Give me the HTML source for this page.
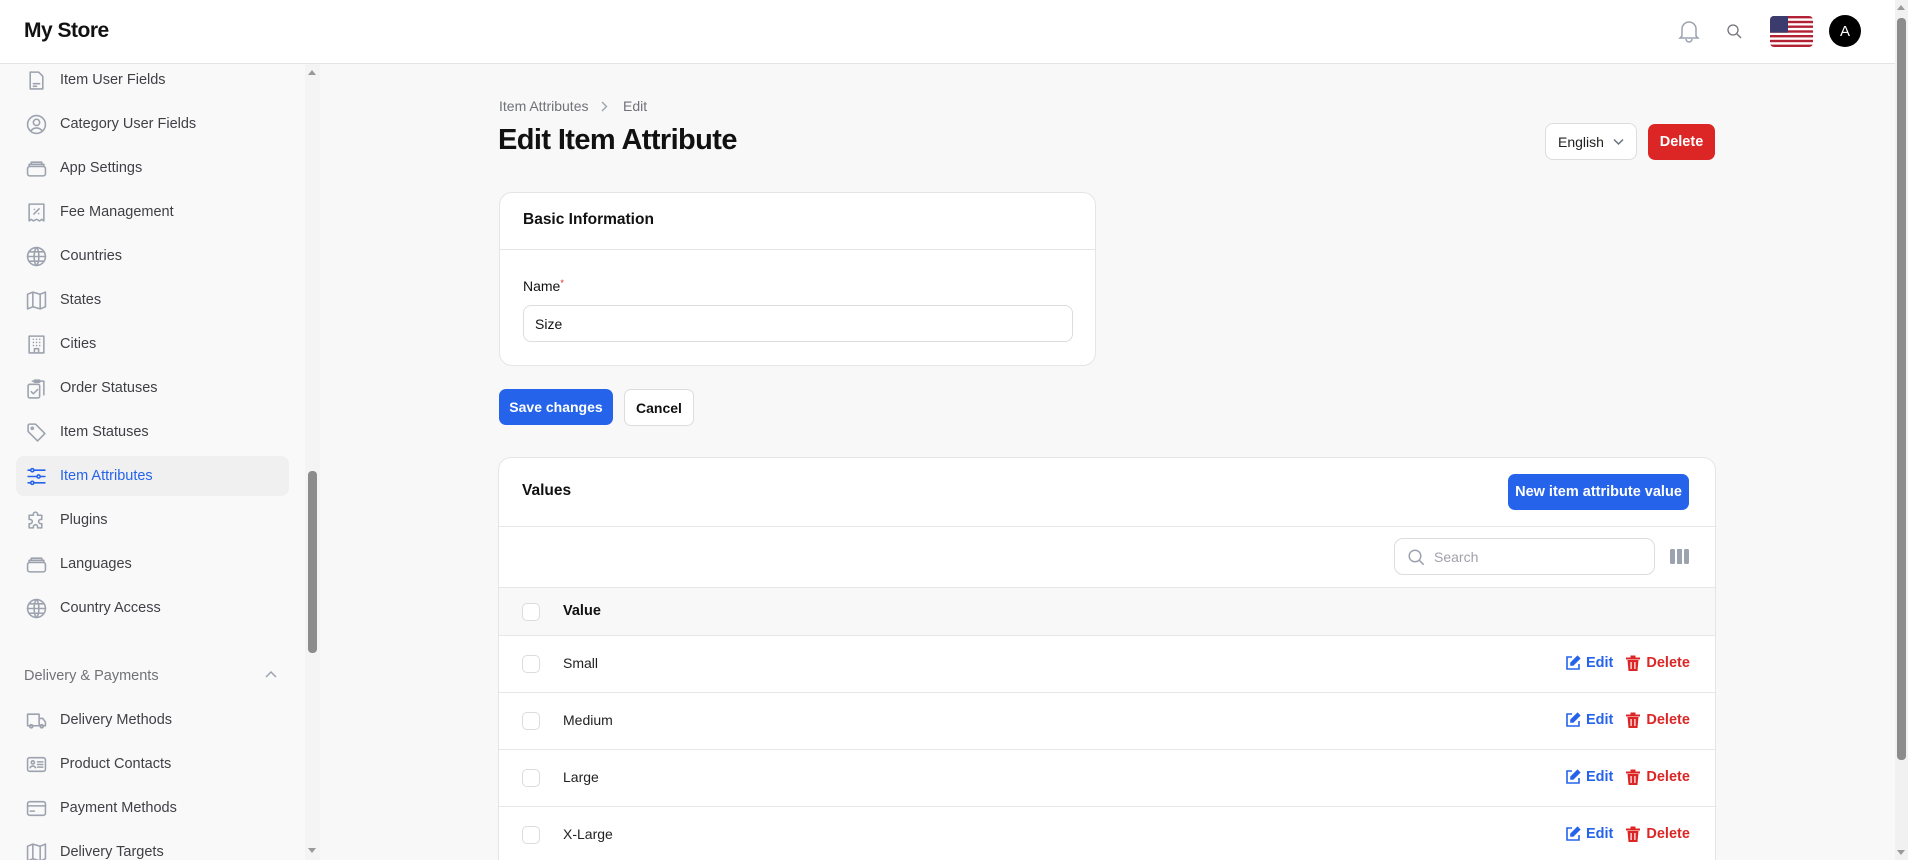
<!DOCTYPE html>
<html style="width:1908px;height:860px;overflow:hidden"><head><meta charset="utf-8">
<style>
*{box-sizing:border-box;margin:0;padding:0}
body{width:1908px;height:860px;overflow:hidden;background:#f8f8f8;font-family:"Liberation Sans",sans-serif;color:#111}
#wrap{position:relative;width:1908px;height:860px;overflow:hidden}
.abs{position:absolute}
.hdr{left:0;top:0;width:1895px;height:64px;background:#fff;border-bottom:1px solid #e4e4e7}
.logo{left:24px;top:19px;font-size:21px;font-weight:bold;letter-spacing:-0.5px}
.side{left:0;top:64px;width:305px;height:796px;background:#f9f9f9}
.strack{left:305px;top:64px;width:15px;height:796px;background:#f4f4f4}
.item{position:absolute;left:16px;width:273px;height:40px;display:flex;align-items:center;font-size:14.5px;color:#3f3f46;border-radius:8px}
.item svg{position:absolute;left:10px;width:21px;height:21px;fill:none;stroke:#9ca3af;stroke-width:1.5;stroke-linecap:round;stroke-linejoin:round}
.item span{position:absolute;left:44px;top:12px}
.item.act{background:#f0f0f0;color:#2563eb}
.item.act svg{stroke:#2563eb}
.card{background:#fff;border:1px solid #e5e5e5;border-radius:13px}
.btn{position:absolute;display:flex;align-items:center;justify-content:center;font-size:14.5px;font-weight:bold;border-radius:7px;white-space:nowrap}
.row{position:absolute;left:0;width:1216px;border-top:1px solid #e7e7e7;height:57px}
.cb{position:absolute;left:23px;width:18px;height:18px;border:1px solid #dcdcdc;border-radius:5px;background:#fff}
.rv{position:absolute;left:64px;font-size:14px;color:#222}
.acts{position:absolute;left:1066px;display:flex;align-items:center;font-size:14.5px;font-weight:bold}
</style></head><body><div id="wrap">
<div class="abs hdr"></div>
<div class="abs logo">My Store</div>
<svg class="abs" style="left:1678px;top:19px" width="22" height="24" viewBox="0 0 22 24" fill="none" stroke="#9ca3af" stroke-width="1.5"><path d="M4 17V10a7 7 0 0 1 14 0v7l2 2H2z"/><path d="M8 20a3 3 0 0 0 6 0"/></svg>
<svg class="abs" style="left:1727px;top:24px" width="15" height="15" viewBox="0 0 15 15" fill="none" stroke="#71717a" stroke-width="1.3"><circle cx="6" cy="6" r="5"/><path d="M10 10l4 4"/></svg>
<svg class="abs" style="left:1770px;top:16px" width="43" height="31" viewBox="0 0 43 31"><defs><clipPath id="fc"><rect width="43" height="31" rx="4"/></clipPath></defs><g clip-path="url(#fc)"><rect width="43" height="31" fill="#fff"/><g fill="#b22234"><rect y="0" width="43" height="2.4"/><rect y="4.8" width="43" height="2.4"/><rect y="9.5" width="43" height="2.4"/><rect y="14.3" width="43" height="2.4"/><rect y="19" width="43" height="2.4"/><rect y="23.8" width="43" height="2.4"/><rect y="28.6" width="43" height="2.4"/></g><rect width="18" height="16.7" fill="#3c3b6e"/></g></svg>
<div class="abs" style="left:1829px;top:15px;width:32px;height:32px;border-radius:50%;background:#000;color:#fff;font-size:15px;display:flex;align-items:center;justify-content:center">A</div>
<div class="abs" style="left:1895px;top:0;width:13px;height:860px;background:#f1f1f1"></div>
<div class="abs" style="left:1897px;top:18px;width:9px;height:742px;background:#8c8c8c;border-radius:4px"></div>
<div class="abs" style="left:1897px;top:5px;width:0;height:0;border-left:4px solid transparent;border-right:4px solid transparent;border-bottom:5px solid #9a9a9a"></div>
<div class="abs" style="left:1897px;top:850px;width:0;height:0;border-left:4px solid transparent;border-right:4px solid transparent;border-top:5px solid #9a9a9a"></div>

<div class="abs side"></div>
<div class="abs strack"></div>
<div class="abs" style="left:308px;top:70px;width:0;height:0;border-left:4.5px solid transparent;border-right:4.5px solid transparent;border-bottom:5px solid #999"></div>
<div class="abs" style="left:308px;top:848px;width:0;height:0;border-left:4.5px solid transparent;border-right:4.5px solid transparent;border-top:5px solid #999"></div>
<div class="abs" style="left:308px;top:471px;width:9px;height:182px;background:#8c8c8c;border-radius:4px"></div>

<div class="item" style="top:60px"><svg viewBox="0 0 20 20"><path d="M4 2h8l4 4v12H4z"/><path d="M7 13h6M7 15.5h3"/></svg><span>Item User Fields</span></div>
<div class="item" style="top:104px"><svg viewBox="0 0 20 20"><circle cx="10" cy="10" r="8.5"/><circle cx="10" cy="8" r="3"/><path d="M5 15.5c3-3 7-3 10 0"/></svg><span>Category User Fields</span></div>
<div class="item" style="top:148px"><svg viewBox="0 0 20 20"><rect x="1.5" y="8" width="17" height="9" rx="2"/><path d="M3 8V6h14v2M5 6V4h10v2"/></svg><span>App Settings</span></div>
<div class="item" style="top:192px"><svg viewBox="0 0 20 20"><path d="M3 2h14v16l-2-1.5-2 1.5-3-1.5-3 1.5-2-1.5-2 1.5z"/><path d="M7.5 11.5l5-5M8 7h.1M12 11h.1"/></svg><span>Fee Management</span></div>
<div class="item" style="top:236px"><svg viewBox="0 0 20 20"><circle cx="10" cy="10" r="8.5"/><path d="M1.5 10h17M10 1.5c-3 3-3 14 0 17M10 1.5c3 3 3 14 0 17M3 5.5h14M3 14.5h14"/></svg><span>Countries</span></div>
<div class="item" style="top:280px"><svg viewBox="0 0 20 20"><path d="M1.5 4l5-2 7 2 5-2v14l-5 2-7-2-5 2z"/><path d="M6.5 2v14M13.5 4v14"/></svg><span>States</span></div>
<div class="item" style="top:324px"><svg viewBox="0 0 20 20"><path d="M3 2h14v16H3zM8 18v-4h4v4M7 5h.1M10 5h.1M13 5h.1M7 8h.1M10 8h.1M13 8h.1M7 11h.1M10 11h.1M13 11h.1"/></svg><span>Cities</span></div>
<div class="item" style="top:368px"><svg viewBox="0 0 20 20"><rect x="2" y="6" width="11" height="13" rx="1.5"/><path d="M6 3h11v13M8 2h5v2H8zM5 13l2 2 4-4"/></svg><span>Order Statuses</span></div>
<div class="item" style="top:412px"><svg viewBox="0 0 20 20"><path d="M2 3v6l9 9 7-7-9-9H3z"/><circle cx="6" cy="6" r="1"/></svg><span>Item Statuses</span></div>
<div class="item act" style="top:456px"><svg viewBox="0 0 20 20"><path d="M2 4h16M2 10h16M2 16h16"/><circle cx="6" cy="4" r="1.5" fill="#f0f0f0"/><circle cx="12" cy="10" r="1.5" fill="#f0f0f0"/><circle cx="6" cy="16" r="1.5" fill="#f0f0f0"/></svg><span>Item Attributes</span></div>
<div class="item" style="top:500px"><svg viewBox="0 0 20 20"><path d="M7 4a2 2 0 1 1 4 0v1h4v4h-1a2 2 0 1 0 0 4h1v4H11v-1a2 2 0 1 0-4 0v1H3v-4h1a2 2 0 1 0 0-4H3V5h4z"/></svg><span>Plugins</span></div>
<div class="item" style="top:544px"><svg viewBox="0 0 20 20"><rect x="1.5" y="8" width="17" height="9" rx="2"/><path d="M3 8V6h14v2M5 6V4h10v2"/></svg><span>Languages</span></div>
<div class="item" style="top:588px"><svg viewBox="0 0 20 20"><circle cx="10" cy="10" r="8.5"/><path d="M1.5 10h17M10 1.5c-3 3-3 14 0 17M10 1.5c3 3 3 14 0 17M3 5.5h14M3 14.5h14"/></svg><span>Country Access</span></div>
<div class="abs" style="left:24px;top:668px;font-size:14.5px;color:#71717a">Delivery &amp; Payments</div>
<svg class="abs" style="left:265px;top:670px" width="12" height="8" viewBox="0 0 12 8" fill="none" stroke="#9ca3af" stroke-width="1.5"><path d="M1 7l5-5 5 5"/></svg>
<div class="item" style="top:700px"><svg viewBox="0 0 20 20"><path d="M1.5 4h11v11h-11zM12.5 8h3.5l2.5 3.5V15h-6"/><circle cx="5" cy="15.5" r="1.5"/><circle cx="15" cy="15.5" r="1.5"/></svg><span>Delivery Methods</span></div>
<div class="item" style="top:744px"><svg viewBox="0 0 20 20"><rect x="1.5" y="3.5" width="17" height="13" rx="2"/><circle cx="6.5" cy="8" r="1.5"/><path d="M4 13c1-2 4-2 5 0M11 7.5h5M11 10h5M11 12.5h5"/></svg><span>Product Contacts</span></div>
<div class="item" style="top:788px"><svg viewBox="0 0 20 20"><rect x="1.5" y="3.5" width="17" height="13" rx="2"/><path d="M1.5 7.5h17M4 12.5h4"/></svg><span>Payment Methods</span></div>
<div class="item" style="top:832px"><svg viewBox="0 0 20 20"><path d="M1.5 4l5-2 7 2 5-2v14l-5 2-7-2-5 2z"/><path d="M6.5 2v14M13.5 4v14"/></svg><span>Delivery Targets</span></div>

<div class="abs" style="left:499px;top:98px;font-size:14px;color:#71717a">Item Attributes</div>
<svg class="abs" style="left:600px;top:101px" width="8" height="11" viewBox="0 0 8 11" fill="none" stroke="#9ca3af" stroke-width="1.4"><path d="M2 1l4.5 4.5L2 10"/></svg>
<div class="abs" style="left:623px;top:98px;font-size:14px;color:#71717a">Edit</div>
<div class="abs" style="left:498px;top:124px;font-size:29px;font-weight:bold;letter-spacing:-0.6px">Edit Item Attribute</div>

<div class="abs" style="left:1545px;top:123px;width:92px;height:37px;border:1px solid #ddd;border-radius:8px;background:#fff;font-size:14px;color:#222"><span class="abs" style="left:12px;top:10px">English</span><svg class="abs" style="left:67px;top:14px" width="11" height="8" viewBox="0 0 11 8" fill="none" stroke="#6b7280" stroke-width="1.5"><path d="M1 1.5l4.5 4.5 4.5-4.5"/></svg></div>
<div class="btn" style="left:1648px;top:124px;width:67px;height:36px;background:#dc2626;color:#fff">Delete</div>

<div class="abs card" style="left:499px;top:192px;width:597px;height:174px">
 <div class="abs" style="left:23px;top:18px;font-size:15.5px;font-weight:bold">Basic Information</div>
 <div class="abs" style="left:0;top:56px;width:595px;border-top:1px solid #e5e5e5"></div>
 <div class="abs" style="left:23px;top:85px;font-size:14px">Name<span style="color:#dc2626;font-size:9px;vertical-align:top">*</span></div>
 <div class="abs" style="left:23px;top:112px;width:550px;height:37px;border:1px solid #ddd;border-radius:8px;font-size:14px;padding:10px 11px">Size</div>
</div>
<div class="btn" style="left:499px;top:389px;width:114px;height:36px;background:#2563eb;color:#fff;font-size:14px">Save changes</div>
<div class="btn" style="left:624px;top:389px;width:70px;height:37px;background:#fff;border:1px solid #ddd;font-size:14px">Cancel</div>

<div class="abs card" style="left:498px;top:457px;width:1218px;height:440px;overflow:hidden">
 <div class="abs" style="left:23px;top:24px;font-size:15.5px;font-weight:bold">Values</div>
 <div class="btn" style="left:1009px;top:16px;width:181px;height:36px;background:#2563eb;color:#fff;font-size:14.5px">New item attribute value</div>
 <div class="abs" style="left:0;top:68px;width:1218px;border-top:1px solid #e7e7e7"></div>
 <div class="abs" style="left:895px;top:80px;width:261px;height:37px;border:1px solid #ddd;border-radius:9px;background:#fff"><svg class="abs" style="left:13px;top:10px" width="17" height="17" viewBox="0 0 17 17" fill="none" stroke="#9ca3af" stroke-width="1.5"><circle cx="7" cy="7" r="5.8"/><path d="M11.2 11.2l4.5 4.5"/></svg><span class="abs" style="left:39px;top:10px;font-size:14px;color:#a1a1aa">Search</span></div>
 <svg class="abs" style="left:1171px;top:91px" width="19" height="15" viewBox="0 0 19 15" fill="#9ca3af"><rect x="0" y="0" width="5" height="15" rx="1.5"/><rect x="7" y="0" width="5" height="15"/><rect x="14" y="0" width="5" height="15" rx="1.5"/></svg>
 <div class="abs" style="left:0;top:129px;width:1218px;height:48px;background:#f8f8f8;border-top:1px solid #e7e7e7"><div class="cb" style="top:15px"></div><div class="abs" style="left:64px;top:15px;font-size:14.5px;font-weight:bold">Value</div></div>

 <div class="row" style="top:177px"><div class="cb" style="top:19px"></div><div class="rv" style="top:19px">Small</div><div class="acts" style="top:19px"><svg width="16" height="16" viewBox="0 0 16 16" fill="none" stroke="#2563eb" stroke-width="1.6"><path d="M7 2H2v12h12V9"/><path d="M12.5 1.5l2 2L8 10H6V8z" fill="#2563eb"/></svg><span style="color:#2563eb;margin-left:5px">Edit</span><svg style="margin-left:13px" width="14" height="16" viewBox="0 0 14 16" fill="#dc2626"><rect x="0" y="2.5" width="14" height="2"/><rect x="4.5" y="0.5" width="5" height="2"/><path d="M1.5 5h11l-1 11h-9zM4.5 7v7h1.2V7zM8.3 7v7h1.2V7z" fill-rule="evenodd"/></svg><span style="color:#dc2626;margin-left:6px">Delete</span></div></div>
 <div class="row" style="top:234px"><div class="cb" style="top:19px"></div><div class="rv" style="top:19px">Medium</div><div class="acts" style="top:19px"><svg width="16" height="16" viewBox="0 0 16 16" fill="none" stroke="#2563eb" stroke-width="1.6"><path d="M7 2H2v12h12V9"/><path d="M12.5 1.5l2 2L8 10H6V8z" fill="#2563eb"/></svg><span style="color:#2563eb;margin-left:5px">Edit</span><svg style="margin-left:13px" width="14" height="16" viewBox="0 0 14 16" fill="#dc2626"><rect x="0" y="2.5" width="14" height="2"/><rect x="4.5" y="0.5" width="5" height="2"/><path d="M1.5 5h11l-1 11h-9zM4.5 7v7h1.2V7zM8.3 7v7h1.2V7z" fill-rule="evenodd"/></svg><span style="color:#dc2626;margin-left:6px">Delete</span></div></div>
 <div class="row" style="top:291px"><div class="cb" style="top:19px"></div><div class="rv" style="top:19px">Large</div><div class="acts" style="top:19px"><svg width="16" height="16" viewBox="0 0 16 16" fill="none" stroke="#2563eb" stroke-width="1.6"><path d="M7 2H2v12h12V9"/><path d="M12.5 1.5l2 2L8 10H6V8z" fill="#2563eb"/></svg><span style="color:#2563eb;margin-left:5px">Edit</span><svg style="margin-left:13px" width="14" height="16" viewBox="0 0 14 16" fill="#dc2626"><rect x="0" y="2.5" width="14" height="2"/><rect x="4.5" y="0.5" width="5" height="2"/><path d="M1.5 5h11l-1 11h-9zM4.5 7v7h1.2V7zM8.3 7v7h1.2V7z" fill-rule="evenodd"/></svg><span style="color:#dc2626;margin-left:6px">Delete</span></div></div>
 <div class="row" style="top:348px"><div class="cb" style="top:19px"></div><div class="rv" style="top:19px">X-Large</div><div class="acts" style="top:19px"><svg width="16" height="16" viewBox="0 0 16 16" fill="none" stroke="#2563eb" stroke-width="1.6"><path d="M7 2H2v12h12V9"/><path d="M12.5 1.5l2 2L8 10H6V8z" fill="#2563eb"/></svg><span style="color:#2563eb;margin-left:5px">Edit</span><svg style="margin-left:13px" width="14" height="16" viewBox="0 0 14 16" fill="#dc2626"><rect x="0" y="2.5" width="14" height="2"/><rect x="4.5" y="0.5" width="5" height="2"/><path d="M1.5 5h11l-1 11h-9zM4.5 7v7h1.2V7zM8.3 7v7h1.2V7z" fill-rule="evenodd"/></svg><span style="color:#dc2626;margin-left:6px">Delete</span></div></div>
</div>
</div></body></html>
